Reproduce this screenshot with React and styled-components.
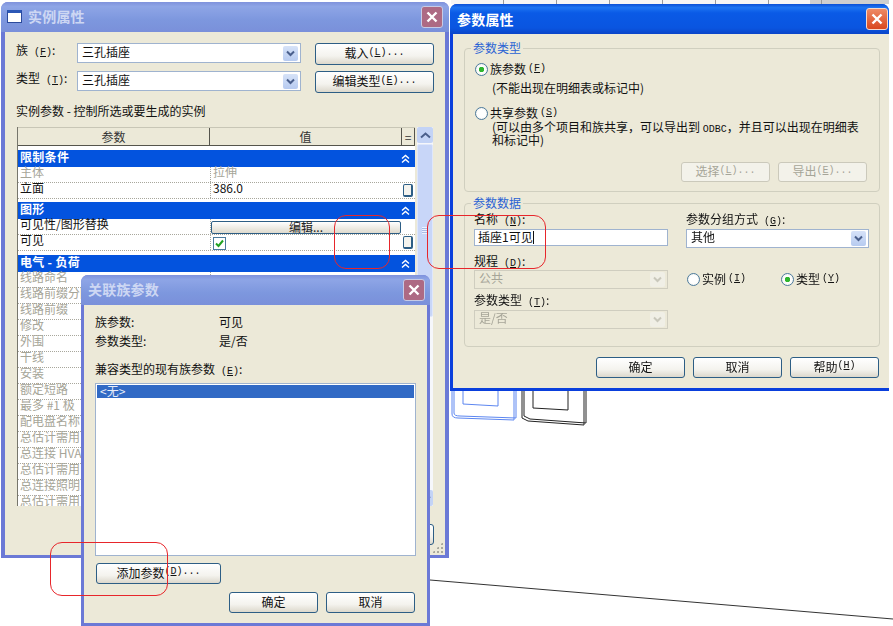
import React from 'react'
import styled, { createGlobalStyle } from 'styled-components'

const GlobalStyle = createGlobalStyle`
    html, body { margin: 0; padding: 0; background: #fff; overflow: hidden; }
    body { font-family: "Noto Sans CJK SC", "Liberation Sans", sans-serif; font-size: 12px; color: #111; }
`

const Desktop = styled.div`
    position: relative;
    width: 893px;
    height: 626px;
    overflow: hidden;
    filter: blur(0.3px);
`
const CadLayer = styled.svg`
    position: absolute;
    left: 0; top: 0;
`
const RedMark = styled.div`
    position: absolute;
    left: ${p => p.$x}px;
    top: ${p => p.$y}px;
    width: ${p => p.$w}px;
    height: ${p => p.$h}px;
    box-sizing: border-box;
    border: 1.5px solid #e7262b;
    border-radius: 12px;
    z-index: 10;
`
const TopStrip = styled.div`
    position: absolute;
    left: 451px; top: 0;
    width: 438px; height: 4px;
    display: flex;
    background: linear-gradient(90deg, #f5f5f5 0, #f5f5f5 82%, #cfcfcf 82%);
    & > i {
        width: 1px;
        margin-left: 52px;
        background: #9a9a9a;
    }
`

// Windows
const Win = styled.div`
    position: absolute;
    left: ${p => p.$x}px;
    top: ${p => p.$y}px;
    width: ${p => p.$w}px;
    height: ${p => p.$h}px;
    z-index: ${p => p.$z};
    box-sizing: border-box;
    display: flex;
    flex-direction: column;
    padding: 0 ${p => p.$padR}px ${p => p.$padB}px ${p => p.$pad}px;
    background: ${p => p.$active ? '#0a3fdc' : '#6b79d6'};
    border-radius: 7px 7px 0 0;
`
const TitleBar = styled.div`
    flex: none;
    height: 29px;
    margin: 0 -${p => p.$padR}px 0 -${p => p.$pad}px;
    padding: 0 ${p => p.$pr}px 1px ${p => p.$pl}px;
    display: flex;
    align-items: center;
    gap: 6px;
    border-radius: 7px 7px 0 0;
    background: ${p => p.$active
        ? 'linear-gradient(180deg, #0a4fd6 0, #1c74f2 12%, #0a5ae6 30%, #0a55e0 80%, #0a44c8 100%)'
        : 'linear-gradient(180deg, #7f92dc 0, #8ea5e6 15%, #7d97de 60%, #7a90da 100%)'};
`
const TitleText = styled.span`
    flex: 1;
    margin-bottom: ${p => p.$active ? 0 : 2}px;
    font-size: 14px;
    font-weight: 700;
    letter-spacing: 0.2px;
    color: ${p => p.$active ? '#fff' : '#cdd7f3'};
`
const CloseBtn = styled.div`
    flex: none;
    width: 20px; height: 20px;
    display: flex;
    align-items: center;
    justify-content: center;
    border: 1px solid ${p => p.$active ? '#f5d9cc' : '#c6cbe6'};
    border-radius: 3px;
    background: ${p => p.$active ? 'linear-gradient(180deg, #ee8a66, #d9481f)' : '#ad6a84'};
`
const AppIcon = styled.div`
    flex: none;
    width: 15px; height: 13px;
    box-sizing: border-box;
    background: #fff;
    border: 1px solid #2b4a9c;
    border-top: 3px solid #2b57b6;
`
const Client = styled.div`
    flex: 1;
    min-height: 0;
    position: relative;
    box-sizing: border-box;
    background: #ece9d8;
    padding: ${p => p.$top}px ${p => p.$right}px 0 11px;
`

// Form parts
const FormRow = styled.div`
    display: flex;
    align-items: flex-start;
    height: 22px;
    margin-bottom: 6px;
`
const FieldLabel = styled.label`
    display: block;
    flex: none;
    width: ${p => p.$w ? p.$w + 'px' : 'auto'};
    height: 14px;
    line-height: 14px;
    margin-top: ${p => p.$mt || 0}px;
    white-space: nowrap;
`
const Hot = styled.span`
    font-family: "Liberation Mono", monospace;
    font-size: 10px;
    line-height: 0;
    & u { text-underline-offset: 1px; }
`
const Combo = styled.div`
    box-sizing: border-box;
    width: ${p => p.$w}px;
    height: ${p => p.$h}px;
    margin-top: ${p => p.$mt || 0}px;
    flex: none;
    display: flex;
    align-items: center;
    justify-content: space-between;
    padding: 0 2px 0 4px;
    border: 1px solid ${p => p.$off ? '#cfcdbf' : '#9fb3cf'};
    background: ${p => p.$off ? '#ece9d8' : '#fff'};
    color: ${p => p.$off ? '#a6a598' : '#111'};
`
const ComboText = styled.span`
    line-height: 14px;
    margin-bottom: 3px;
`
const ComboArrow = styled.div`
    width: 15px;
    height: ${p => p.$h}px;
    display: flex;
    align-items: center;
    justify-content: center;
    border-radius: 2px;
    background: ${p => p.$off ? '#f0efe6' : 'linear-gradient(180deg, #d6e2f8, #b7cbf0)'};
`
const PushBtn = styled.div`
    box-sizing: border-box;
    flex: none;
    width: ${p => p.$w}px;
    height: ${p => p.$h || 21}px;
    margin-left: ${p => p.$ml || 0}px;
    margin-top: ${p => p.$mt || 0}px;
    padding-bottom: 3px;
    display: flex;
    align-items: center;
    justify-content: center;
    border: 1px solid ${p => p.$off ? '#cbc9bb' : '#2d5e85'};
    border-radius: 3px;
    background: ${p => p.$off ? '#f3f2ea' : 'linear-gradient(180deg, #fff 0, #f4f3ee 60%, #dcd8cc 100%)'};
    color: ${p => p.$off ? '#a6a598' : '#111'};
    white-space: nowrap;
`
const ButtonRow = styled.div`
    display: flex;
    justify-content: flex-end;
    gap: ${p => p.$gap || 8}px;
    margin-top: ${p => p.$mt}px;
    margin-right: ${p => p.$mr || 0}px;
`
const Caption = styled.div`
    height: 14px;
    line-height: 14px;
    margin-top: ${p => p.$mt || 0}px;
    white-space: nowrap;
`

// Property table
const TableWrap = styled.div`
    display: flex;
    gap: 2px;
    height: 379px;
    margin: 9px 0 0 1px;
    width: 416px;
`
const Table = styled.div`
    flex: none;
    width: 398px;
    background: #fff;
    overflow: hidden;
    border-left: 1px solid #77766c;
    box-sizing: border-box;
`
const HeaderRow = styled.div`
    display: grid;
    grid-template-columns: 192px 192px 13px;
    height: 19px;
    margin-bottom: 4px;
    background: #ece9d8;
    border-top: 1px solid #c8c6b6;
    box-sizing: border-box;
`
const HeaderCell = styled.div`
    display: flex;
    align-items: center;
    justify-content: center;
    border-right: 1px solid #55544c;
    border-bottom: 1px solid #55544c;
    color: #333;
`
const GroupRow = styled.div`
    height: 17px;
    line-height: 13px;
    margin-top: ${p => p.$mt || 0}px;
    padding: 0 5px 0 2px;
    display: flex;
    align-items: flex-start;
    justify-content: space-between;
    background: #0353de;
    color: #fff;
    font-weight: 700;
    letter-spacing: 0.3px;
    & > svg { margin-top: 4px; }
`
const PropRow = styled.div`
    display: grid;
    grid-template-columns: 192px 192px 13px;
    height: 16px;
    box-sizing: border-box;
    border-bottom: 1px dotted #a8a79c;
    line-height: 10px;
    color: ${p => p.$off ? '#a6a598' : '#111'};
`
const NameCell = styled.div`
    padding-left: 2px;
    white-space: nowrap;
`
const ValueCell = styled.div`
    padding-left: 2px;
    border-left: 1px dotted #a8a79c;
    display: flex;
    align-items: flex-start;
`
const MiniBtn = styled.div`
    width: 10px;
    height: 13px;
    margin: 1px 0 0 1px;
    box-sizing: border-box;
    border: 1px solid #2d5e85;
    border-right-width: 2px;
    border-bottom-width: 2px;
    border-radius: 2px;
    background: #f4f3ee;
`
const CellBtn = styled.div`
    box-sizing: border-box;
    width: 190px;
    height: 13px;
    margin: 2px 0 0 -2px;
    padding-bottom: 2px;
    display: flex;
    align-items: center;
    justify-content: center;
    border: 1px solid #2d5e85;
    border-radius: 2px;
    background: linear-gradient(180deg, #fff, #dedacd);
    color: #222;
`
const CheckMark = styled.div`
    box-sizing: border-box;
    width: 13px; height: 13px;
    margin-top: 2px;
    border: 1px solid #4b7a9c;
    background: #fff;
    display: flex;
    align-items: center;
    justify-content: center;
`
const Scroll = styled.div`
    flex: none;
    width: 16px;
    display: flex;
    flex-direction: column;
    background: #f6f7fb;
`
const ScrollBtn = styled.div`
    height: 16px;
    display: flex;
    align-items: center;
    justify-content: center;
    border-radius: 2px;
    background: #c3d3f6;
`
const ScrollThumb = styled.div`
    height: 173px;
    margin-top: 1px;
    flex: none;
    display: flex;
    align-items: center;
    justify-content: center;
    border-radius: 2px;
    background: #c8d6f8;
    border: 1px solid #dfe7fb;
    box-sizing: border-box;
    margin-bottom: auto;
    &::after {
        content: '';
        width: 6px;
        height: 7px;
        background: repeating-linear-gradient(180deg, #eef2fd 0, #eef2fd 1px, #a9bce6 1px, #a9bce6 2px);
    }
`
const SizeGrip = styled.div`
    position: absolute;
    right: 2px; bottom: 2px;
    width: 11px; height: 11px;
    background: radial-gradient(circle, #a9a89d 1px, transparent 1.2px) 0 0 / 4px 4px;
    clip-path: polygon(100% 0, 100% 100%, 0 100%);
`

// Dialog parts
const InfoGrid = styled.div`
    display: grid;
    grid-template-columns: 124px auto;
    grid-auto-rows: 14px;
    row-gap: 5px;
    line-height: 14px;
`
const ListBox = styled.div`
    box-sizing: border-box;
    width: 321px;
    height: 173px;
    margin-top: 7px;
    padding: 1px;
    border: 1px solid #9fb3cf;
    background: #fff;
`
const ListItem = styled.div`
    height: 13px;
    line-height: 11px;
    padding-left: 3px;
    background: #316ac5;
    color: #e6ecf8;
`
const GroupBox = styled.fieldset`
    margin: ${p => p.$mt || 0}px 0 0;
    padding: ${p => p.$pt}px ${p => p.$pr}px ${p => p.$pb}px 9px;
    border: 1px solid #d0cfbf;
    border-radius: 4px;
    min-width: 0;
`
const Legend = styled.legend`
    margin-left: -3px;
    padding: 0 2px;
    height: 16px;
    line-height: 16px;
    color: #2a63d4;
    font-size: 12px;
`
const RadioRow = styled.label`
    display: flex;
    align-items: center;
    gap: 2px;
    height: 14px;
    line-height: 12px;
    margin-top: ${p => p.$mt || 0}px;
    margin-left: ${p => p.$ml || 0}px;
    width: ${p => p.$w ? p.$w + 'px' : 'auto'};
    flex: none;
    white-space: nowrap;
`
const RadioDot = styled.span`
    flex: none;
    box-sizing: border-box;
    width: 13px; height: 13px;
    border: 1px solid #4b7a9c;
    border-radius: 50%;
    background: ${p => p.$on
        ? 'radial-gradient(circle, #2fb52f 0, #2fb52f 2.5px, #fff 3px, #eeeee6 100%)'
        : 'radial-gradient(circle, #fff 50%, #e4e3da 100%)'};
`
const Note = styled.div`
    margin-top: ${p => p.$mt || 0}px;
    margin-left: ${p => p.$ml || 0}px;
    line-height: 13px;
    white-space: nowrap;
`
const DataGrid = styled.div`
    display: grid;
    grid-template-columns: 194px 183px;
    column-gap: 18px;
    margin-top: 1px;
`
const DataCol = styled.div`
    display: flex;
    flex-direction: column;
`
const TextInput = styled.div`
    box-sizing: border-box;
    width: 194px;
    height: 17px;
    margin-top: 3px;
    padding-left: 3px;
    line-height: 13px;
    border: 1px solid #9fb3cf;
    background: #fff;
    & > i {
        display: inline-block;
        width: 1px;
        height: 13px;
        vertical-align: -2px;
        background: #111;
    }
`
const RadioPair = styled.div`
    display: flex;
    margin-top: 24px;
`

const CloseX = () => (
    <svg width="12" height="12" viewBox="0 0 12 12">
        <path d="M1.5 1.5 L10.5 10.5 M10.5 1.5 L1.5 10.5" stroke="#fff" strokeWidth="2.4" fill="none" />
    </svg>
)
const ChevDown = ({ off }) => (
    <svg width="9" height="7" viewBox="0 0 9 7">
        <path d="M1 1.5 L4.5 5 L8 1.5" stroke={off ? '#c9c8bc' : '#4a5f8c'} strokeWidth="2" fill="none" />
    </svg>
)
const DoubleUp = () => (
    <svg width="9" height="10" viewBox="0 0 9 10">
        <path d="M1 4.5 L4.5 1.5 L8 4.5 M1 8.5 L4.5 5.5 L8 8.5" stroke="#fff" strokeWidth="1.4" fill="none" />
    </svg>
)
const ScrollChev = ({ down }) => (
    <svg width="11" height="7" viewBox="0 0 11 7">
        <path d={down ? 'M1 1.5 L5.5 5.5 L10 1.5' : 'M1 5.5 L5.5 1.5 L10 5.5'} stroke="#4a5f8c" strokeWidth="2" fill="none" />
    </svg>
)
const Key = ({ k, dots }) => <Hot> (<u>{k}</u>){dots ? '...' : ''}</Hot>

const lockedRows = ['线路命名', '线路前缀分隔符', '线路前缀', '修改', '外围', '干线', '安装', '额定短路', '最多 #1 极', '配电盘名称', '总估计需用', '总连接 HVAC', '总估计需用', '总连接照明', '总估计需用']

const InstanceWindow = () => (
    <Win $x={1} $y={2} $w={448} $h={556} $z={1} $pad={4} $padR={4} $padB={3}>
        <TitleBar $pad={4} $padR={4} $pl={6} $pr={6}>
            <AppIcon />
            <TitleText>实例属性</TitleText>
            <CloseBtn><CloseX /></CloseBtn>
        </TitleBar>
        <Client $top={11} $right={11}>
            <FormRow>
                <FieldLabel $w={61}>族<Key k="F" />:</FieldLabel>
                <Combo $w={224} $h={20}><ComboText>三孔插座</ComboText><ComboArrow $h={15}><ChevDown /></ComboArrow></Combo>
                <PushBtn $w={119} $h={22} $ml={14}>载入<Key k="L" dots /></PushBtn>
            </FormRow>
            <FormRow>
                <FieldLabel $w={61}>类型<Key k="T" />:</FieldLabel>
                <Combo $w={224} $h={20}><ComboText>三孔插座</ComboText><ComboArrow $h={15}><ChevDown /></ComboArrow></Combo>
                <PushBtn $w={119} $h={22} $ml={14}>编辑类型<Key k="E" dots /></PushBtn>
            </FormRow>
            <Caption $mt={11}>实例参数 - 控制所选或要生成的实例</Caption>
            <TableWrap>
                <Table>
                    <HeaderRow>
                        <HeaderCell>参数</HeaderCell>
                        <HeaderCell>值</HeaderCell>
                        <HeaderCell>=</HeaderCell>
                    </HeaderRow>
                    <GroupRow>限制条件<DoubleUp /></GroupRow>
                    <PropRow $off><NameCell>主体</NameCell><ValueCell>拉伸</ValueCell></PropRow>
                    <PropRow><NameCell>立面</NameCell><ValueCell>386.0</ValueCell><MiniBtn /></PropRow>
                    <GroupRow $mt={3}>图形<DoubleUp /></GroupRow>
                    <PropRow>
                        <NameCell>可见性/图形替换</NameCell>
                        <ValueCell><CellBtn>编辑...</CellBtn></ValueCell>
                    </PropRow>
                    <PropRow>
                        <NameCell>可见</NameCell>
                        <ValueCell>
                            <CheckMark>
                                <svg width="9" height="9" viewBox="0 0 9 9">
                                    <path d="M1 4.5 L3.5 7 L8 1.5" stroke="#21a121" strokeWidth="2" fill="none" />
                                </svg>
                            </CheckMark>
                        </ValueCell>
                        <MiniBtn />
                    </PropRow>
                    <GroupRow $mt={4}>电气 - 负荷<DoubleUp /></GroupRow>
                    {lockedRows.map((name, i) => (
                        <PropRow $off key={i}><NameCell>{name}</NameCell><ValueCell /></PropRow>
                    ))}
                </Table>
                <Scroll>
                    <ScrollBtn><ScrollChev /></ScrollBtn>
                    <ScrollThumb />
                    <ScrollBtn><ScrollChev down /></ScrollBtn>
                </Scroll>
            </TableWrap>
            <ButtonRow $mt={18}>
                <PushBtn $w={89}>确定</PushBtn>
            </ButtonRow>
            <SizeGrip />
        </Client>
    </Win>
)

const LinkDialog = () => (
    <Win $x={81} $y={275} $w={349} $h={351} $z={2} $pad={3} $padR={3} $padB={3}>
        <TitleBar $pad={3} $padR={3} $pl={7} $pr={5}>
            <TitleText>关联族参数</TitleText>
            <CloseBtn><CloseX /></CloseBtn>
        </TitleBar>
        <Client $top={10} $right={12}>
            <InfoGrid>
                <span>族参数:</span><span>可见</span>
                <span>参数类型:</span><span>是/否</span>
            </InfoGrid>
            <Caption $mt={14}>兼容类型的现有族参数<Key k="E" />:</Caption>
            <ListBox><ListItem>&lt;无&gt;</ListItem></ListBox>
            <PushBtn $w={125} $ml={1} $mt={7}>添加参数<Key k="D" dots /></PushBtn>
            <ButtonRow $mt={8}>
                <PushBtn $w={89}>确定</PushBtn>
                <PushBtn $w={89}>取消</PushBtn>
            </ButtonRow>
        </Client>
    </Win>
)

const ParamDialog = () => (
    <Win $x={450} $y={4} $w={439} $h={387} $z={3} $pad={3} $padR={0} $padB={3} $active>
        <TitleBar $pad={3} $padR={0} $pl={7} $pr={1} $active>
            <TitleText $active>参数属性</TitleText>
            <CloseBtn $active><CloseX /></CloseBtn>
        </TitleBar>
        <Client $top={6} $right={9}>
            <GroupBox $pt={6} $pr={12} $pb={9}>
                <Legend>参数类型</Legend>
                <RadioRow $ml={1}><RadioDot $on />族参数<Key k="F" /></RadioRow>
                <Note $mt={5} $ml={18}>(不能出现在明细表或标记中)</Note>
                <RadioRow $ml={1} $mt={12}><RadioDot />共享参数<Key k="S" /></RadioRow>
                <Note $ml={18}>(可以由多个项目和族共享，可以导出到 <Hot>ODBC</Hot>，并且可以出现在明细表<br />和标记中)</Note>
                <ButtonRow $mt={16}>
                    <PushBtn $w={89} $h={20} $off>选择<Key k="L" dots /></PushBtn>
                    <PushBtn $w={89} $h={20} $off>导出<Key k="E" dots /></PushBtn>
                </ButtonRow>
            </GroupBox>
            <GroupBox $mt={3} $pt={0} $pr={9} $pb={17}>
                <Legend>参数数据</Legend>
                <DataGrid>
                    <DataCol>
                        <FieldLabel>名称<Key k="N" />:</FieldLabel>
                        <TextInput>插座1可见<i /></TextInput>
                        <FieldLabel $mt={8}>规程<Key k="D" />:</FieldLabel>
                        <Combo $w={194} $h={19} $off $mt={2}><ComboText>公共</ComboText><ComboArrow $h={15} $off><ChevDown off /></ComboArrow></Combo>
                        <FieldLabel $mt={4}>参数类型<Key k="T" />:</FieldLabel>
                        <Combo $w={194} $h={19} $off $mt={3}><ComboText>是/否</ComboText><ComboArrow $h={15} $off><ChevDown off /></ComboArrow></Combo>
                    </DataCol>
                    <DataCol>
                        <FieldLabel>参数分组方式<Key k="G" />:</FieldLabel>
                        <Combo $w={183} $h={19} $mt={3}><ComboText>其他</ComboText><ComboArrow $h={15}><ChevDown /></ComboArrow></Combo>
                        <RadioPair>
                            <RadioRow $ml={1} $w={94}><RadioDot />实例<Key k="I" /></RadioRow>
                            <RadioRow><RadioDot $on />类型<Key k="Y" /></RadioRow>
                        </RadioPair>
                    </DataCol>
                </DataGrid>
            </GroupBox>
            <ButtonRow $mt={10} $mr={1}>
                <PushBtn $w={89}>确定</PushBtn>
                <PushBtn $w={89}>取消</PushBtn>
                <PushBtn $w={89}>帮助<Key k="H" /></PushBtn>
            </ButtonRow>
        </Client>
    </Win>
)

export default function App() {
    return (
        <Desktop>
            <GlobalStyle />
            <CadLayer width="893" height="626">
                <path d="M430 580 L893 619" stroke="#333" strokeWidth="1" fill="none" />
                <g fill="none" stroke="#5c86f0" strokeWidth="1">
                    <path d="M452 391 V414 Q452 418 458 418 L514 420 V391" />
                    <path d="M454 391 V413 Q454 416 460 416 L516 418 V391" />
                    <path d="M463 391 V404 L498 406 V391" />
                </g>
                <g fill="none" stroke="#222" strokeWidth="1">
                    <path d="M522 391 V418 L528 421 L584 425 V391" />
                    <path d="M524 391 V416 L530 419 L586 423 V391" />
                    <path d="M533 391 V408 L568 410 V391" />
                </g>
            </CadLayer>
            <TopStrip><i /><i /><i /><i /><i /><i /><i /></TopStrip>
            <InstanceWindow />
            <LinkDialog />
            <ParamDialog />
            <RedMark $x={334} $y={215} $w={56} $h={54} />
            <RedMark $x={427} $y={215} $w={119} $h={54} />
            <RedMark $x={50} $y={542} $w={118} $h={54} />
        </Desktop>
    )
}
